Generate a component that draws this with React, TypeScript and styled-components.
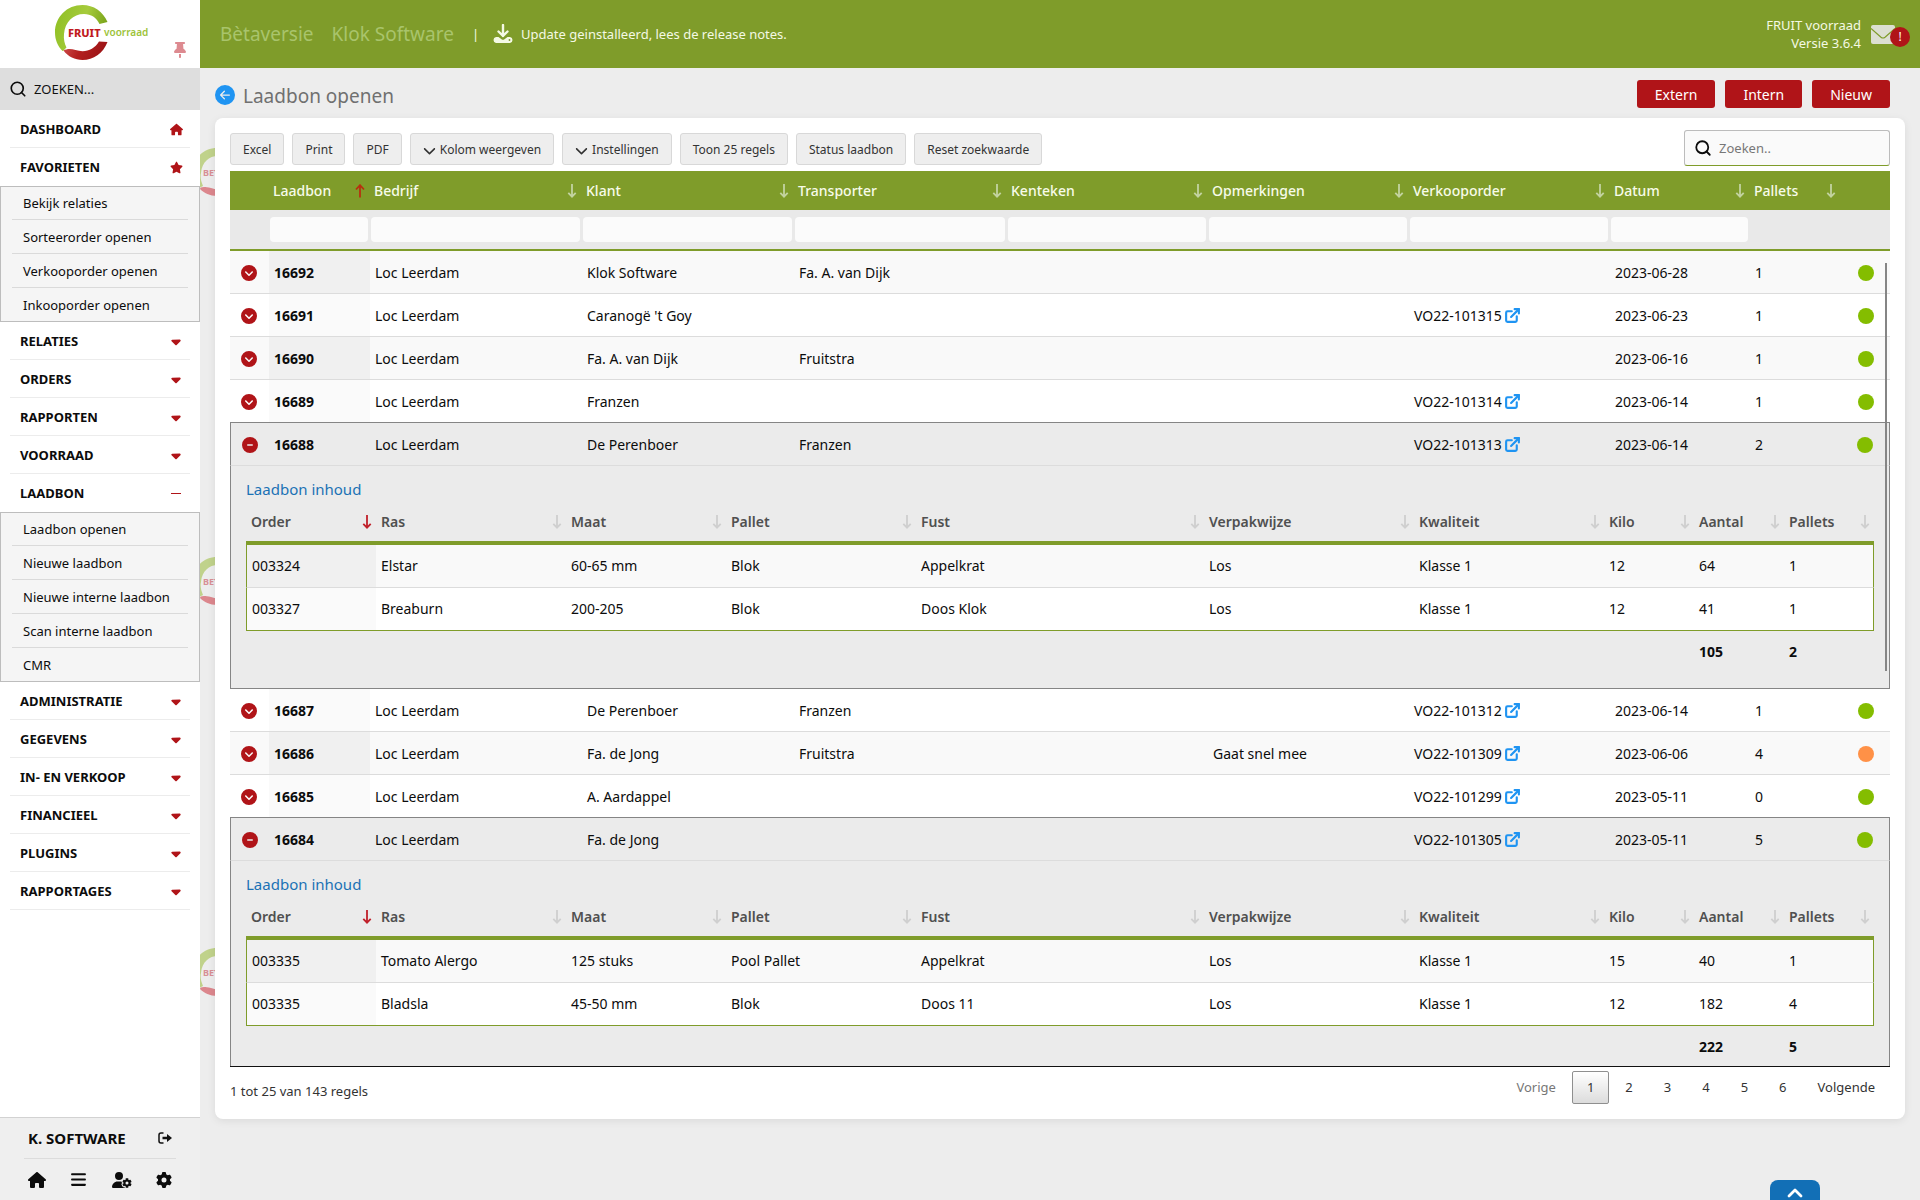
import React, { useId, useState } from "react";
import styled, { createGlobalStyle, css } from "styled-components";
import {
  FaHouse,
  FaStar,
  FaCaretDown,
  FaThumbtack,
  FaChevronDown,
  FaCircleChevronDown,
  FaCircleMinus,
  FaBars,
  FaUserGear,
  FaGear,
} from "react-icons/fa6";
import { BsArrowLeftCircleFill } from "react-icons/bs";
import { ChevronUp, ExternalLink, Search } from "lucide-react";

const color = {
  green: "#7f9c2a",
  red: "#b01418",
  blue: "#1f94f2",
  link: "#1b72b5",
  page: "#ededed",
  line: "#dcdcdc",
  frame: "#858585",
};

const GlobalStyle = createGlobalStyle`
  *, *::before, *::after { box-sizing: border-box; }
  body {
    margin: 0;
    background: ${color.page};
    color: #0c0c0c;
    font: 14px/20px "Noto Sans", "Open Sans", sans-serif;
  }
  button, input { font: inherit; color: inherit; }
  button { cursor: pointer; }
  a { color: inherit; text-decoration: none; }
`;

/* ---------- shell ---------- */

const Shell = styled.div`
  display: grid;
  grid-template-columns: 200px minmax(0, 1fr);
  min-height: 100vh;
`;

const Sidebar = styled.aside`
  position: sticky;
  top: 0;
  z-index: 2;
  display: flex;
  flex-direction: column;
  height: 100vh;
  background: #fff;
`;

const LogoBar = styled.div`
  position: relative;
  height: 68px;
`;

const LogoLink = styled.a`
  display: block;
  padding-left: 50px;
`;

const PinButton = styled.button`
  position: absolute;
  right: 12px;
  bottom: 10px;
  display: flex;
  padding: 0;
  border: 0;
  background: none;
  color: #dd8a90;
`;

const SideSearch = styled.label`
  display: flex;
  align-items: center;
  gap: 7px;
  height: 42px;
  padding: 0 10px 0 9px;
  background: #dedede;
`;

const SideSearchInput = styled.input`
  flex: 1;
  min-width: 0;
  padding: 0;
  border: 0;
  outline: 0;
  background: none;
  font-size: 13px;
  &::placeholder {
    color: #111;
    opacity: 1;
  }
`;

const Nav = styled.nav`
  flex: 1;
`;

const NavItem = styled.button<{ $open?: boolean }>`
  display: flex;
  align-items: center;
  justify-content: space-between;
  width: calc(100% - 20px);
  height: 38px;
  margin: 0 10px;
  padding: 1px 7px 0 10px;
  border: 0;
  border-bottom: 1px solid ${(p) => (p.$open ? "transparent" : "#ececec")};
  background: none;
  font-size: 13px;
  font-weight: 700;
  text-align: left;
`;

const NavIcon = styled.span`
  display: flex;
  justify-content: center;
  width: 14px;
  color: ${color.red};
`;

const Dash = styled.span`
  width: 10px;
  height: 1px;
  background: ${color.red};
`;

const SubNav = styled.ul`
  margin: 0;
  padding: 0 12px;
  list-style: none;
  background: #f5f5f5;
  outline: 1px solid #bdbdbd;
  outline-offset: -1px;
`;

const SubItem = styled.li`
  height: 34px;
  padding: 1px 11px 0;
  border-bottom: 1px solid #dadada;
  font-size: 13px;
  line-height: 33px;
  &:last-child {
    border-bottom-color: transparent;
  }
`;

const SideFooter = styled.footer`
  height: 83px;
  padding: 0 24px;
  border-top: 1px solid #d2d2d2;
  background: #efefef;
`;

const UserRow = styled.div`
  display: flex;
  align-items: center;
  justify-content: space-between;
  height: 41px;
  padding: 0 4px;
  border-bottom: 1px solid #dcdcdc;
  font-size: 15px;
  font-weight: 700;
`;

const FooterIcons = styled.div`
  display: flex;
  align-items: center;
  justify-content: space-between;
  height: 41px;
  padding: 0 4px;
`;

const IconButton = styled.button`
  display: flex;
  padding: 0;
  border: 0;
  background: none;
`;

/* ---------- top bar ---------- */

const Main = styled.main`
  position: relative;
  display: flex;
  flex-direction: column;
  overflow: hidden;
`;

const TopBar = styled.header`
  display: flex;
  align-items: center;
  height: 68px;
  padding: 0 10px 0 20px;
  background: ${color.green};
  color: #f4f9e4;
  font-size: 13px;
  line-height: 18px;
`;

const Faded = styled.span`
  margin-right: 18px;
  color: #a9c46c;
  font-size: 19px;
  line-height: 28px;
`;

const UpdateNote = styled.a`
  display: flex;
  align-items: center;
  gap: 8px;
  margin-left: 14px;
`;

const Version = styled.div`
  margin-left: auto;
  text-align: right;
`;

const MailButton = styled.button`
  position: relative;
  display: flex;
  width: 39px;
  margin-left: 10px;
  padding: 0;
  border: 0;
  background: none;
`;

const MailBadge = styled.span`
  position: absolute;
  top: 2px;
  left: 19px;
  width: 20px;
  height: 20px;
  border-radius: 50%;
  background: ${color.red};
  color: #fff;
  font-size: 12px;
  line-height: 20px;
  text-align: center;
`;

/* ---------- page ---------- */

const TitleRow = styled.div`
  display: flex;
  align-items: center;
  gap: 8px;
  height: 50px;
  padding: 2px 30px 0 15px;
`;

const BackLink = styled.a`
  display: flex;
  padding-top: 2px;
  color: ${color.blue};
`;

const Title = styled.h1`
  flex: 1;
  margin: 0;
  padding-top: 3px;
  color: #707070;
  font-size: 19px;
  font-weight: 400;
  line-height: 26px;
`;

const Actions = styled.div`
  display: flex;
  gap: 10px;
`;

const ActionButton = styled.button`
  height: 28px;
  padding: 2px 18px 0;
  border: 0;
  border-radius: 3px;
  background: ${color.red};
  color: #fff;
`;

const Card = styled.section`
  position: relative;
  margin: 0 15px;
  padding: 12px 15px 15px;
  border-radius: 8px;
  background: #fff;
  box-shadow: 0 2px 8px rgba(0, 0, 0, 0.08);
`;

const Watermark = styled.svg<{ $top: number }>`
  position: absolute;
  top: ${(p) => p.$top}px;
  left: -7px;
  opacity: 0.55;
`;

const Toolbar = styled.div`
  display: flex;
  align-items: center;
  justify-content: space-between;
  margin-bottom: 5px;
`;

const ToolGroup = styled.div`
  display: flex;
  gap: 8px;
  padding-top: 2px;
`;

const ToolButton = styled.button`
  display: flex;
  align-items: center;
  gap: 4px;
  height: 32px;
  padding: 2px 12px 0;
  border: 1px solid #d8d8d8;
  border-radius: 3px;
  background: #eee;
  color: #333;
  font-size: 12px;
`;

const TableSearch = styled.label`
  display: flex;
  align-items: center;
  gap: 7px;
  width: 206px;
  height: 36px;
  padding: 0 9px;
  border: 1px solid #bcbcbc;
  border-bottom-color: ${color.green};
  border-radius: 3px;
  background: #fafafa;
`;

const TableSearchInput = styled.input`
  flex: 1;
  min-width: 0;
  padding: 0;
  border: 0;
  outline: 0;
  background: none;
  font-size: 13px;
  &::placeholder {
    color: #777;
    opacity: 1;
  }
`;

/* ---------- outer table ---------- */

const Table = styled.table`
  width: 100%;
  table-layout: fixed;
  border-collapse: separate;
  border-spacing: 0;
`;

const HeadCell = styled.th`
  height: 39px;
  padding: 0 5px 0 4px;
  background: ${color.green};
  color: #f7fbe9;
  font-weight: 500;
  text-align: left;
`;

const HeadLabel = styled.div`
  display: flex;
  align-items: center;
  justify-content: space-between;
`;

const FilterCell = styled.td`
  height: 41px;
  padding: 0 2px 0 1px;
  border-bottom: 2px solid ${color.green};
  background: #e9e9e9;
`;

const FilterInput = styled.input`
  display: block;
  width: 100%;
  height: 25px;
  padding: 0 5px;
  border: 0;
  border-radius: 4px;
  background: #fbfbfb;
`;

const ScrollFrame = styled.div`
  position: relative;
`;

const ScrollBody = styled.div`
  height: 68vh;
  overflow: hidden auto;
  border-bottom: 1px solid #111;
  scrollbar-width: none;
`;

const ScrollThumb = styled.div`
  position: absolute;
  top: 12px;
  right: 3px;
  width: 2px;
  height: 50%;
  background: #858585;
`;

const BodyRow = styled.tr<{ $odd: boolean; $open: boolean; $beforeOpen: boolean }>`
  & > td {
    height: 43px;
    padding: 2px 5px 0;
    border-bottom: 1px solid
      ${(p) => (p.$beforeOpen ? color.frame : color.line)};
    background: ${(p) => (p.$open ? "#ebebeb" : p.$odd ? "#f9f9f9" : "#fff")};
  }
  & > td:first-child {
    padding: 0 6px 0 5px;
  }
  & > td:nth-child(2) {
    background: ${(p) => (p.$open ? "#ebebeb" : p.$odd ? "#f0f0f0" : "#fafafa")};
    font-weight: 700;
  }
  ${(p) =>
    p.$open &&
    css`
      & > td:first-child {
        border-left: 1px solid ${color.frame};
      }
      & > td:last-child {
        border-right: 1px solid ${color.frame};
      }
    `}
`;

const DetailCell = styled.td`
  padding: 12px 15px 14px;
  border: 1px solid ${color.frame};
  border-top: 0;
  background: #ebebeb;
  box-shadow: 0 1px 0 ${color.line};
`;

const ToggleCell = styled.td`
  text-align: center;
`;

const ToggleButton = styled.button`
  display: inline-flex;
  padding: 0;
  border: 0;
  background: none;
  color: ${color.red};
  vertical-align: middle;
`;

const StatusDot = styled.span<{ $tone: "green" | "orange" }>`
  display: block;
  width: 16px;
  height: 16px;
  margin: 0 auto;
  border-radius: 50%;
  background: ${(p) => (p.$tone === "green" ? "#84bd00" : "#ff9147")};
`;

const OrderLink = styled.a`
  display: inline-flex;
  align-items: center;
  gap: 2px;
  & > svg {
    margin-bottom: 2px;
    color: ${color.blue};
  }
`;

/* ---------- detail table ---------- */

const DetailTitle = styled.h2`
  margin: 0;
  color: ${color.link};
  font-size: 15px;
  font-weight: 400;
  line-height: 23px;
`;

const DetailHead = styled.th`
  height: 44px;
  padding: 1px 4px 0 5px;
  border-bottom: 4px solid ${color.green};
  color: #505050;
  font-weight: 600;
  text-align: left;
`;

const DetailRow = styled.tr<{ $odd: boolean; $last: boolean }>`
  & > td {
    height: 43px;
    padding: 0 5px;
    border-bottom: 1px solid ${(p) => (p.$last ? color.green : color.line)};
    background: ${(p) => (p.$odd ? "#f9f9f9" : "#fff")};
  }
  & > td:first-child {
    border-left: 1px solid ${color.green};
    background: ${(p) => (p.$odd ? "#f0f0f0" : "#fafafa")};
  }
  & > td:last-child {
    border-right: 1px solid ${color.green};
  }
`;

const TotalCell = styled.td`
  height: 43px;
  padding: 0 5px 2px;
  font-weight: 700;
`;

/* ---------- pager ---------- */

const PagerRow = styled.div`
  display: flex;
  align-items: center;
  justify-content: space-between;
  padding-top: 4px;
  color: #333;
  font-size: 13px;
`;

const PagerInfo = styled.div`
  padding-top: 7px;
`;

const Pager = styled.div`
  display: flex;
  gap: 1px;
`;

const PageButton = styled.button<{ $current?: boolean }>`
  height: 33px;
  padding: 0 14px 2px;
  border: 1px solid ${(p) => (p.$current ? "#8f8f8f" : "transparent")};
  border-radius: 2px;
  background: ${(p) =>
    p.$current ? "linear-gradient(#fff, #dcdcdc)" : "none"};
  color: #333;
  &:disabled {
    color: #777;
  }
`;

const ToTop = styled.a`
  position: fixed;
  right: 100px;
  bottom: 0;
  display: flex;
  justify-content: center;
  width: 50px;
  height: 20px;
  padding-top: 1px;
  border-radius: 8px 8px 0 0;
  overflow: hidden;
  background: #126fb6;
  color: #fff;
`;

/* ---------- drawings ---------- */

const Logo = () => (
  <svg width="104" height="64" viewBox="50 0 104 64" aria-label="FRUIT voorraad" role="img">
    <defs>
      <linearGradient id="leaf" x1="0" y1="0" x2="1" y2="0.3">
        <stop offset="0" stopColor="#8dbf21" />
        <stop offset="0.6" stopColor="#a6cb3c" />
        <stop offset="1" stopColor="#7ba51c" />
      </linearGradient>
      <linearGradient id="berry" x1="0" y1="0" x2="1" y2="0.2">
        <stop offset="0" stopColor="#d0504f" />
        <stop offset="0.45" stopColor="#b3201f" />
        <stop offset="1" stopColor="#9c1416" />
      </linearGradient>
    </defs>
    <path
      d="M107.5 22C103 11.500 93.500 5 82.500 5C67 5 55 17 55 32.500C55 39.500 57.500 46 62.500 51C64 51 64.500 49 66.500 47.500C64.500 43.500 63.500 39 64 34C65 22 73 14 84 14C91 14 96.500 17.500 99.500 24Z"
      fill="url(#leaf)"
    />
    <path
      d="M107.500 42C103 53.500 93.500 60 82.500 60C75 60 68 56.500 63.500 50.500C67 48.500 71 48.500 75.500 50C85 53 94 50 99 41.500Z"
      fill="url(#berry)"
    />
    <text x="68" y="36.500" fontFamily="Noto Sans, sans-serif" fontSize="11" fontWeight="800" fill="#c01a20">
      FRUIT
    </text>
    <text x="104" y="36" fontFamily="Noto Sans, sans-serif" fontSize="10" fontWeight="600" fill="#9dc33a">
      voorraad
    </text>
  </svg>
);

const BetaMark = ({ top }: { top: number }) => (
  <Watermark $top={top} width="60" height="48" viewBox="0 0 60 48" aria-hidden="true">
    <path
      d="M46 15C42 6 34 0 24 0C10 0 0 11 0 24C0 31 2 36 6 40L10 38C8 33 7 29 8 25C9 14 16 8 25 8C31 8 36 11 39 17Z"
      fill="#9dbd3c"
    />
    <path d="M46 33C42 42 34 48 24 48C17 48 11 45 7 41C7 39 10 38 18 40C26 43 34 41 39 33Z" fill="#cf3540" />
    <text x="10" y="28" fontFamily="Noto Sans, sans-serif" fontSize="9" fontWeight="700" fill="#c8444d">
      BETA
    </text>
  </Watermark>
);

const SortArrow = ({ tone, up }: { tone: string; up?: boolean }) => (
  <svg width="10" height="14" viewBox="0 0 10 14" fill="none" stroke={tone} strokeWidth="1.8" aria-hidden="true">
    {up ? <path d="M5 13.500V1.500M1 5.500L5 1.200L9 5.500" /> : <path d="M5 0V12.500M1.300 8.800L5 12.600L8.700 8.800" />}
  </svg>
);

const DownloadIcon = () => (
  <svg width="20" height="20" viewBox="0 0 20 20" fill="none" aria-hidden="true">
    <path d="M10 1V12M5.500 7.500L10 11.800L14.500 7.500" stroke="#f4f9e4" strokeWidth="2.400" strokeLinecap="round" strokeLinejoin="round" />
    <path
      d="M3 13H5.500L8.500 15.200Q10 16.300 11.500 15.200L14.500 13H17Q19.500 13.300 19.500 16T17 19H3Q0.500 18.700 0.500 16T3 13Z"
      fill="#f4f9e4"
    />
    <circle cx="16.500" cy="16" r="0.900" fill={color.green} />
  </svg>
);

const MailIcon = () => (
  <svg width="24" height="19" viewBox="0 0 24 19" aria-hidden="true">
    <rect x="0" y="0" width="24" height="19" rx="2" fill="#dcdfd2" />
    <path d="M0 3.500L10 12.200Q12 13.800 14 12.200L24 3.500" fill="none" stroke={color.green} strokeWidth="1.200" />
  </svg>
);

const LogoutIcon = () => (
  <svg width="14" height="12" viewBox="0 0 14 12" aria-hidden="true">
    <path d="M5.500 1H3Q1 1 1 3V9Q1 11 3 11H5.500" fill="none" stroke="#111" strokeWidth="1.500" />
    <path d="M4.500 4.700H9V2L14 6L9 10V7.300H4.500Z" fill="#111" />
  </svg>
);

/* ---------- data ---------- */

type Detail = [string, string, string, string, string, string, string, string, string, string];

interface Loading {
  id: string;
  klant: string;
  transporter?: string;
  note?: string;
  order?: string;
  date: string;
  pallets: number;
  tone?: "orange";
  details?: Detail[];
  totals?: [string, string];
}

const loadings: Loading[] = [
  { id: "16692", klant: "Klok Software", transporter: "Fa. A. van Dijk", date: "2023-06-28", pallets: 1 },
  { id: "16691", klant: "Caranogë 't Goy", order: "VO22-101315", date: "2023-06-23", pallets: 1 },
  { id: "16690", klant: "Fa. A. van Dijk", transporter: "Fruitstra", date: "2023-06-16", pallets: 1 },
  { id: "16689", klant: "Franzen", order: "VO22-101314", date: "2023-06-14", pallets: 1 },
  {
    id: "16688",
    klant: "De Perenboer",
    transporter: "Franzen",
    order: "VO22-101313",
    date: "2023-06-14",
    pallets: 2,
    details: [
      ["003324", "Elstar", "60-65 mm", "Blok", "Appelkrat", "Los", "Klasse 1", "12", "64", "1"],
      ["003327", "Breaburn", "200-205", "Blok", "Doos Klok", "Los", "Klasse 1", "12", "41", "1"],
    ],
    totals: ["105", "2"],
  },
  { id: "16687", klant: "De Perenboer", transporter: "Franzen", order: "VO22-101312", date: "2023-06-14", pallets: 1 },
  {
    id: "16686",
    klant: "Fa. de Jong",
    transporter: "Fruitstra",
    note: "Gaat snel mee",
    order: "VO22-101309",
    date: "2023-06-06",
    pallets: 4,
    tone: "orange",
  },
  { id: "16685", klant: "A. Aardappel", order: "VO22-101299", date: "2023-05-11", pallets: 0 },
  {
    id: "16684",
    klant: "Fa. de Jong",
    order: "VO22-101305",
    date: "2023-05-11",
    pallets: 5,
    details: [
      ["003335", "Tomato Alergo", "125 stuks", "Pool Pallet", "Appelkrat", "Los", "Klasse 1", "15", "40", "1"],
      ["003335", "Bladsla", "45-50 mm", "Blok", "Doos 11", "Los", "Klasse 1", "12", "182", "4"],
    ],
    totals: ["222", "5"],
  },
];

const outerColumns = [
  { label: "", width: 39 },
  { label: "Laadbon", width: 101 },
  { label: "Bedrijf", width: 212 },
  { label: "Klant", width: 212 },
  { label: "Transporter", width: 213 },
  { label: "Kenteken", width: 201 },
  { label: "Opmerkingen", width: 201 },
  { label: "Verkooporder", width: 201 },
  { label: "Datum", width: 140 },
  { label: "Pallets", width: 91 },
  { label: "", width: 49 },
];

const detailColumns = [
  { label: "Order", width: 130 },
  { label: "Ras", width: 190 },
  { label: "Maat", width: 160 },
  { label: "Pallet", width: 190 },
  { label: "Fust", width: 288 },
  { label: "Verpakwijze", width: 210 },
  { label: "Kwaliteit", width: 190 },
  { label: "Kilo", width: 90 },
  { label: "Aantal", width: 90 },
  { label: "Pallets", width: 90 },
];

const menu: { label: string; icon?: "home" | "star"; items?: string[] }[] = [
  { label: "DASHBOARD", icon: "home" },
  {
    label: "FAVORIETEN",
    icon: "star",
    items: ["Bekijk relaties", "Sorteerorder openen", "Verkooporder openen", "Inkooporder openen"],
  },
  { label: "RELATIES" },
  { label: "ORDERS" },
  { label: "RAPPORTEN" },
  { label: "VOORRAAD" },
  {
    label: "LAADBON",
    items: ["Laadbon openen", "Nieuwe laadbon", "Nieuwe interne laadbon", "Scan interne laadbon", "CMR"],
  },
  { label: "ADMINISTRATIE" },
  { label: "GEGEVENS" },
  { label: "IN- EN VERKOOP" },
  { label: "FINANCIEEL" },
  { label: "PLUGINS" },
  { label: "RAPPORTAGES" },
];

/* ---------- components ---------- */

const Columns = ({ list }: { list: { width: number }[] }) => (
  <colgroup>
    {list.map((c, i) => (
      <col key={i} width={c.width} />
    ))}
  </colgroup>
);

const SideMenu = () => (
  <Sidebar>
    <LogoBar>
      <LogoLink href="#home">
        <Logo />
      </LogoLink>
      <PinButton aria-label="Menu vastzetten">
        <FaThumbtack size={16} viewBox="0 0 384 512" style={undefined} />
      </PinButton>
    </LogoBar>
    <SideSearch>
      <Search size={18} strokeWidth={2.2} />
      <SideSearchInput placeholder="ZOEKEN..." aria-label="Zoeken in menu" />
    </SideSearch>
    <Nav>
      {menu.map((m) => (
        <React.Fragment key={m.label}>
          <NavItem $open={!!m.items} aria-expanded={!!m.items}>
            {m.label}
            <NavIcon>
              {m.icon === "home" ? (
                <FaHouse size={13} />
              ) : m.icon === "star" ? (
                <FaStar size={13} />
              ) : m.items ? (
                <Dash />
              ) : (
                <FaCaretDown size={15} />
              )}
            </NavIcon>
          </NavItem>
          {m.items && (
            <SubNav>
              {m.items.map((s) => (
                <SubItem key={s}>
                  <a href="#menu">{s}</a>
                </SubItem>
              ))}
            </SubNav>
          )}
        </React.Fragment>
      ))}
    </Nav>
    <SideFooter>
      <UserRow>
        K. SOFTWARE
        <IconButton aria-label="Uitloggen">
          <LogoutIcon />
        </IconButton>
      </UserRow>
      <FooterIcons>
        <IconButton aria-label="Home">
          <FaHouse size={18} />
        </IconButton>
        <IconButton aria-label="Menu">
          <FaBars size={17} />
        </IconButton>
        <IconButton aria-label="Gebruiker">
          <FaUserGear size={20} />
        </IconButton>
        <IconButton aria-label="Instellingen">
          <FaGear size={16} />
        </IconButton>
      </FooterIcons>
    </SideFooter>
  </Sidebar>
);

const DetailTable = ({ rows, totals }: { rows: Detail[]; totals: [string, string] }) => (
  <Table>
    <Columns list={detailColumns} />
    <thead>
      <tr>
        {detailColumns.map((c, i) => (
          <DetailHead key={c.label} scope="col">
            <HeadLabel>
              {c.label}
              <SortArrow tone={i === 0 ? "#c0202a" : "#cfcfcf"} />
            </HeadLabel>
          </DetailHead>
        ))}
      </tr>
    </thead>
    <tbody>
      {rows.map((r, i) => (
        <DetailRow key={i} $odd={i % 2 === 0} $last={i === rows.length - 1}>
          {r.map((v, j) => (
            <td key={j}>{v}</td>
          ))}
        </DetailRow>
      ))}
    </tbody>
    <tfoot>
      <tr>
        <TotalCell colSpan={8} />
        <TotalCell>{totals[0]}</TotalCell>
        <TotalCell>{totals[1]}</TotalCell>
      </tr>
    </tfoot>
  </Table>
);

const LoadingTable = () => {
  const [open, setOpen] = useState<string[]>(["16688", "16684"]);
  const toggle = (id: string) =>
    setOpen((now) => (now.includes(id) ? now.filter((x) => x !== id) : [...now, id]));
  const isOpen = (l?: Loading) => !!l && !!l.details && open.includes(l.id);

  return (
    <>
      <Table>
        <Columns list={outerColumns} />
        <thead>
          <tr>
            {outerColumns.map((c, i) => (
              <HeadCell key={i} scope="col">
                {c.label && (
                  <HeadLabel>
                    {c.label}
                    <SortArrow up={i === 1} tone={i === 1 ? "#b8300f" : "#c3d3a0"} />
                  </HeadLabel>
                )}
              </HeadCell>
            ))}
          </tr>
          <tr>
            {outerColumns.map((c, i) => (
              <FilterCell key={i}>
                {i > 0 && i < 9 && <FilterInput aria-label={`Filter ${c.label}`} />}
              </FilterCell>
            ))}
          </tr>
        </thead>
      </Table>
      <ScrollFrame>
        <ScrollBody>
          <Table>
            <Columns list={outerColumns} />
            <tbody>
              {loadings.map((l, i) => (
                <React.Fragment key={l.id}>
                  <BodyRow $odd={i % 2 === 0} $open={isOpen(l)} $beforeOpen={isOpen(loadings[i + 1])}>
                    <ToggleCell>
                      <ToggleButton aria-label={`Laadbon ${l.id}`} aria-expanded={isOpen(l)} onClick={() => toggle(l.id)}>
                        {isOpen(l) ? <FaCircleMinus size={16} /> : <FaCircleChevronDown size={16} />}
                      </ToggleButton>
                    </ToggleCell>
                    <td>{l.id}</td>
                    <td>Loc Leerdam</td>
                    <td>{l.klant}</td>
                    <td>{l.transporter}</td>
                    <td />
                    <td>{l.note}</td>
                    <td>
                      {l.order && (
                        <OrderLink href="#order">
                          {l.order}
                          <ExternalLink size={17} strokeWidth={3} />
                        </OrderLink>
                      )}
                    </td>
                    <td>{l.date}</td>
                    <td>{l.pallets}</td>
                    <td>
                      <StatusDot $tone={l.tone ?? "green"} />
                    </td>
                  </BodyRow>
                  {isOpen(l) && (
                    <tr>
                      <DetailCell colSpan={11}>
                        <DetailTitle>Laadbon inhoud</DetailTitle>
                        <DetailTable rows={l.details!} totals={l.totals!} />
                      </DetailCell>
                    </tr>
                  )}
                </React.Fragment>
              ))}
            </tbody>
          </Table>
        </ScrollBody>
        <ScrollThumb />
      </ScrollFrame>
    </>
  );
};

export default function App() {
  const searchId = useId();
  return (
    <>
      <GlobalStyle />
      <Shell>
        <SideMenu />
        <Main>
          <BetaMark top={148} />
          <BetaMark top={557} />
          <BetaMark top={948} />
          <TopBar>
            <Faded>Bètaversie</Faded>
            <Faded>Klok Software</Faded>
            <span>|</span>
            <UpdateNote href="#release">
              <DownloadIcon />
              Update geinstalleerd, lees de release notes.
            </UpdateNote>
            <Version>
              FRUIT voorraad
              <br />
              Versie 3.6.4
            </Version>
            <MailButton aria-label="Berichten">
              <MailIcon />
              <MailBadge>!</MailBadge>
            </MailButton>
          </TopBar>
          <TitleRow>
            <BackLink href="#back" aria-label="Terug">
              <BsArrowLeftCircleFill size={20} />
            </BackLink>
            <Title>Laadbon openen</Title>
            <Actions>
              <ActionButton>Extern</ActionButton>
              <ActionButton>Intern</ActionButton>
              <ActionButton>Nieuw</ActionButton>
            </Actions>
          </TitleRow>
          <Card>
            <Toolbar>
              <ToolGroup>
                <ToolButton>Excel</ToolButton>
                <ToolButton>Print</ToolButton>
                <ToolButton>PDF</ToolButton>
                <ToolButton>
                  <FaChevronDown size={13} />
                  Kolom weergeven
                </ToolButton>
                <ToolButton>
                  <FaChevronDown size={13} />
                  Instellingen
                </ToolButton>
                <ToolButton>Toon 25 regels</ToolButton>
                <ToolButton>Status laadbon</ToolButton>
                <ToolButton>Reset zoekwaarde</ToolButton>
              </ToolGroup>
              <TableSearch htmlFor={searchId}>
                <Search size={18} strokeWidth={2.4} />
                <TableSearchInput id={searchId} placeholder="Zoeken.." aria-label="Zoeken" />
              </TableSearch>
            </Toolbar>
            <LoadingTable />
            <PagerRow>
              <PagerInfo>1 tot 25 van 143 regels</PagerInfo>
              <Pager>
                <PageButton disabled>Vorige</PageButton>
                <PageButton $current>1</PageButton>
                {[2, 3, 4, 5, 6].map((n) => (
                  <PageButton key={n}>{n}</PageButton>
                ))}
                <PageButton>Volgende</PageButton>
              </Pager>
            </PagerRow>
          </Card>
          <ToTop href="#top" aria-label="Naar boven">
            <ChevronUp size={24} strokeWidth={2.8} />
          </ToTop>
        </Main>
      </Shell>
    </>
  );
}
